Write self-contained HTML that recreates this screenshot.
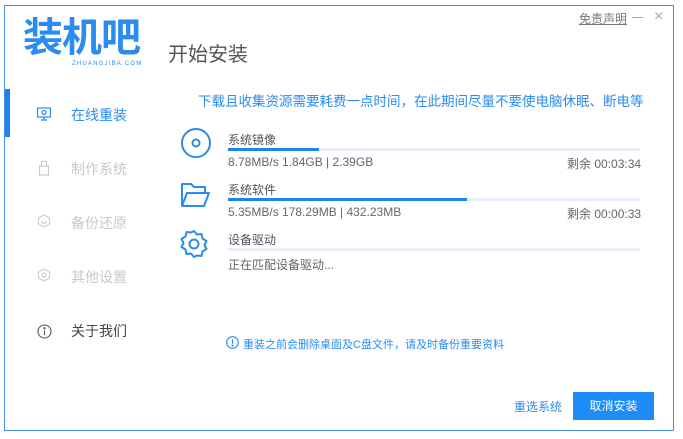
<!DOCTYPE html>
<html><head><meta charset="utf-8"><style>
*{margin:0;padding:0;box-sizing:border-box}
body{width:683px;height:439px;background:#fff;position:relative;overflow:hidden;font-family:"Liberation Sans","Noto Sans CJK SC",sans-serif}
.win{position:absolute;left:4px;top:5px;width:670px;height:426px;border:1px solid #4a90e2;background:#fff}
.a{position:absolute;white-space:nowrap}
.track{position:absolute;left:228px;width:412px;height:3px;background:#e6eefa}
.fill{position:absolute;left:0;top:0;height:3px;background:#1e83f0}
.nav{font-size:14px;color:#c8c8c8}
.sm{font-size:12px;color:#666}
</style></head><body>
<div class="win"></div>
<div class="a" style="left:23px;top:15px;font-size:40px;font-weight:bold;color:#2a8cf0;letter-spacing:-1px;line-height:46px">装机吧</div>
<div class="a" style="left:72px;top:61px;font-size:6px;color:#2a8cf0;letter-spacing:1.2px">ZHUANGJIBA.COM</div>
<div class="a" style="left:168px;top:38px;font-size:20px;color:#555">开始安装</div>
<div class="a" style="left:579px;top:10px;font-size:12px;color:#777;text-decoration:underline">免责声明</div>
<div class="a" style="left:632px;top:17px;width:11px;height:1px;background:#aaa"></div>
<div class="a" style="left:654px;top:8px;font-size:16px;color:#aaa">×</div>
<div class="a" style="left:5px;top:89px;width:5px;height:48px;background:#1e83f0"></div>
<svg class="a" style="left:36px;top:106px" width="16" height="16" viewBox="0 0 16 16" fill="none" stroke="#2a8cf0" stroke-width="1.2"><rect x="1.5" y="2" width="13" height="9"/><path d="M8 11v3M5 14h6"/><circle cx="8" cy="6.5" r="2"/></svg>
<div class="a" style="left:71px;top:105px;font-size:14px;color:#2a8cf0">在线重装</div>
<svg class="a" style="left:38px;top:160px" width="12" height="16" viewBox="0 0 12 16" fill="none" stroke="#ccc" stroke-width="1.2"><rect x="1.5" y="6" width="9" height="9"/><path d="M3.5 6V1.5h5V6"/></svg>
<div class="a nav" style="left:71px;top:159px">制作系统</div>
<svg class="a" style="left:37px;top:214px" width="14" height="14" viewBox="0 0 14 14" fill="none" stroke="#ccc" stroke-width="1.2"><path d="M7 1l5.5 3v6L7 13 1.5 10V4z"/><path d="M4.5 7a2.5 2.5 0 105 0"/></svg>
<div class="a nav" style="left:71px;top:213px">备份还原</div>
<svg class="a" style="left:37px;top:268px" width="14" height="14" viewBox="0 0 14 14" fill="none" stroke="#ccc" stroke-width="1.2"><path d="M7 1l5.5 3v6L7 13 1.5 10V4z"/><circle cx="7" cy="7" r="2"/></svg>
<div class="a nav" style="left:71px;top:267px">其他设置</div>
<svg class="a" style="left:37px;top:324px" width="15" height="15" viewBox="0 0 15 15" fill="none" stroke="#555" stroke-width="1.1"><circle cx="7.5" cy="7.5" r="6.5"/><path d="M7.5 6.5v4.5"/><circle cx="7.5" cy="4.3" r=".6" fill="#555"/></svg>
<div class="a" style="left:71px;top:321px;font-size:14px;color:#444">关于我们</div>
<div class="a" style="left:198px;top:90px;font-size:13.5px;color:#2a8cf0">下载且收集资源需要耗费一点时间，在此期间尽量不要使电脑休眠、断电等</div>
<svg class="a" style="left:180px;top:127px" width="32" height="32" viewBox="0 0 32 32" fill="none" stroke="#2a8cf0" stroke-width="2"><circle cx="16" cy="16" r="14"/><circle cx="16" cy="16" r="3.5"/></svg>
<div class="a sm" style="left:228px;top:131px;color:#555">系统镜像</div>
<div class="track" style="top:148px"><div class="fill" style="width:91px"></div></div>
<div class="a sm" style="left:228px;top:155px">8.78MB/s 1.84GB | 2.39GB</div>
<div class="a sm" style="left:567px;top:155px">剩余 00:03:34</div>
<svg class="a" style="left:180px;top:182px" width="30" height="26" viewBox="0 0 30 26" fill="none" stroke="#2a8cf0" stroke-width="2" stroke-linejoin="round"><path d="M2 24V2h9l3 3h11v5"/><path d="M2 24l5-13h22l-5 13z"/></svg>
<div class="a sm" style="left:228px;top:181px;color:#555">系统软件</div>
<div class="track" style="top:198px"><div class="fill" style="width:239px"></div></div>
<div class="a sm" style="left:228px;top:205px">5.35MB/s 178.29MB | 432.23MB</div>
<div class="a sm" style="left:567px;top:205px">剩余 00:00:33</div>
<svg class="a" style="left:179px;top:229px" width="30" height="30" viewBox="0 0 30 30" fill="none" stroke="#2a8cf0" stroke-width="2" stroke-linejoin="round"><path d="M15 2l3 3.5 4.5-.5 1 4.5 4 2.5-2 4 2 4-4 2.5-1 4.5-4.5-.5L15 28l-3-3.5-4.5.5-1-4.5-4-2.5 2-4-2-4 4-2.5 1-4.5 4.5.5z"/><circle cx="15" cy="15" r="4.5"/></svg>
<div class="a sm" style="left:228px;top:231px;color:#555">设备驱动</div>
<div class="track" style="top:248px"></div>
<div class="a sm" style="left:228px;top:256px">正在匹配设备驱动...</div>
<svg class="a" style="left:226px;top:336px" width="13" height="13" viewBox="0 0 13 13" fill="none" stroke="#2a8cf0" stroke-width="1.1"><circle cx="6.5" cy="6.5" r="5.8"/><path d="M6.5 3.3v4.5"/><circle cx="6.5" cy="9.6" r=".5" fill="#2a8cf0"/></svg>
<div class="a" style="left:243px;top:336px;font-size:11px;color:#2a8cf0">重装之前会删除桌面及C盘文件，请及时备份重要资料</div>
<div class="a" style="left:514px;top:398px;font-size:12px;color:#2a8cf0">重选系统</div>
<div class="a" style="left:573px;top:392px;width:81px;height:28px;background:#1e8cf8;color:#fff;font-size:12px;text-align:center;line-height:28px">取消安装</div>
</body></html>
